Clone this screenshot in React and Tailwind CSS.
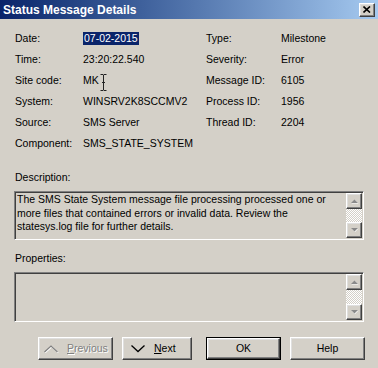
import React from 'react';

const raised =
  'border border-t-white border-l-white border-r-[#404040] border-b-[#404040] shadow-[inset_-1px_-1px_0_#808080,inset_1px_1px_0_#dfdfdf]';

const sunken =
  'border border-t-[#808080] border-l-[#808080] border-r-white border-b-white shadow-[inset_1px_1px_0_#404040,inset_-1px_-1px_0_#d4d0c8]';

const Arrow = ({ up }) => (
  <svg width="9" height="6" viewBox="0 0 9 6">
    {up ? (
      <>
        <polygon points="1.5,5.5 8.5,5.5 5,2" fill="#fff" />
        <polygon points="1,5 8,5 4.5,1.5" fill="#8a8a8a" />
      </>
    ) : (
      <>
        <polygon points="1.5,1.5 8.5,1.5 5,5" fill="#fff" />
        <polygon points="1,1 8,1 4.5,4.5" fill="#8a8a8a" />
      </>
    )}
  </svg>
);

const ScrollBar = () => (
  <div className="flex flex-col w-[16px] h-full">
    <div className={`h-[16px] bg-[#d4d0c8] flex items-center justify-center ${raised}`}>
      <Arrow up />
    </div>
    <div className="flex-1 bg-[image:repeating-conic-gradient(#ffffff_0%_25%,#d4d0c8_0%_50%)] bg-[length:2px_2px]" />
    <div className={`h-[16px] bg-[#d4d0c8] flex items-center justify-center ${raised}`}>
      <Arrow />
    </div>
  </div>
);

const TextBox = ({ children, height }) => (
  <div className={`ml-[14px] w-[350px] flex ${sunken} ${height}`}>
    <div className="flex-1 pl-[2px] pt-[1px] pr-[2px] leading-[13.5px]">{children}</div>
    <div className="py-[1px] pr-[1px]">
      <ScrollBar />
    </div>
  </div>
);

const IBeam = () => (
  <svg width="7" height="17" viewBox="0 0 7 17" className="inline-block ml-[1px] -mb-[4px]">
    <path d="M0.5 0.5h2.5l0.5 0.5l0.5 -0.5h2.5M3.5 1v15M0.5 16.5h2.5l0.5 -0.5l0.5 0.5h2.5M2 8.5h3" stroke="#222" strokeWidth="1" fill="none" />
  </svg>
);

const Field = ({ label, value }) => (
  <>
    <div className="h-[21px] flex items-center">{label}</div>
    <div className="h-[21px] flex items-center">{value}</div>
  </>
);

const Chevron = ({ up, color = '#000' }) => (
  <svg width="16" height="9" viewBox="0 0 16 9">
    {up ? (
      <>
        <path d="M1.5 8L8 2l6.5 6" stroke="#fff" strokeWidth="1.2" fill="none" transform="translate(0.7 0.7)" />
        <path d="M1.5 8L8 2l6.5 6" stroke={color} strokeWidth="1.2" fill="none" />
      </>
    ) : (
      <path d="M1.5 1.5L8 7.5l6.5 -6" stroke={color} strokeWidth="1.3" fill="none" />
    )}
  </svg>
);

export default function App() {
  return (
    <div className="w-[378px] h-[368px] bg-[#d4d0c8] text-black text-[10.5px] font-['Liberation_Sans',Arial,sans-serif] overflow-hidden">
      {/* TITLE BAR */}
      <div className="h-[19px] flex items-center justify-between pl-[3px] pr-[3px] bg-gradient-to-r from-[#0a246a] to-[#a6caf0]">
        <span className="text-white font-bold text-[12px]">Status Message Details</span>
        <div className={`w-[16px] h-[14px] bg-[#d4d0c8] flex items-center justify-center ${raised}`}>
          <svg width="8" height="7" viewBox="0 0 8 7">
            <path d="M0.5 0.5L7 6.5M7 0.5L0.5 6.5" stroke="#000" strokeWidth="1.6" />
          </svg>
        </div>
      </div>

      {/* FIELDS */}
      <div className="mt-[9px] pl-[15px] grid grid-cols-[68px_123px_75px_1fr]">
        <Field
          label="Date:"
          value={<span className="bg-[#0a246a] text-white px-[1px] leading-[13px]">07-02-2015</span>}
        />
        <Field label="Type:" value="Milestone" />
        <Field label="Time:" value="23:20:22.540" />
        <Field label="Severity:" value="Error" />
        <Field
          label="Site code:"
          value={
            <span className="flex items-center">
              MK
              <IBeam />
            </span>
          }
        />
        <Field label="Message ID:" value="6105" />
        <Field label="System:" value="WINSRV2K8SCCMV2" />
        <Field label="Process ID:" value="1956" />
        <Field label="Source:" value="SMS Server" />
        <Field label="Thread ID:" value="2204" />
        <Field label="Component:" value="SMS_STATE_SYSTEM" />
        <Field label="" value="" />
      </div>

      {/* DESCRIPTION */}
      <div className="mt-[16px] pl-[15px] h-[14px] leading-[14px]">Description:</div>
      <div className="mt-[7px]">
        <TextBox height="h-[49px]">
          The SMS State System message file processing processed one or more files that contained errors or
          invalid data. Review the statesys.log file for further details.
        </TextBox>
      </div>

      {/* PROPERTIES */}
      <div className="mt-[11px] pl-[15px] h-[14px] leading-[14px]">Properties:</div>
      <div className="mt-[7px]">
        <TextBox height="h-[50px]" />
      </div>

      {/* ACTIONS */}
      <div className="mt-[15px] flex">
        <div className={`ml-[38px] w-[75px] h-[23px] flex items-center pl-[4px] gap-[8px] text-[#808080] ${raised}`}>
          <Chevron up color="#808080" />
          <span className="[text-shadow:1px_1px_0_#fff]">
            <span className="underline">P</span>revious
          </span>
        </div>
        <div className={`ml-[9px] w-[70px] h-[23px] flex items-center pl-[7px] gap-[8px] ${raised}`}>
          <Chevron />
          <span>
            <span className="underline">N</span>ext
          </span>
        </div>
        <div className="ml-[14px] w-[75px] h-[23px] border border-black flex">
          <div className={`flex-1 flex items-center justify-center ${raised}`}>OK</div>
        </div>
        <div className={`ml-[9px] w-[75px] h-[23px] flex items-center justify-center ${raised}`}>Help</div>
      </div>
    </div>
  );
}
